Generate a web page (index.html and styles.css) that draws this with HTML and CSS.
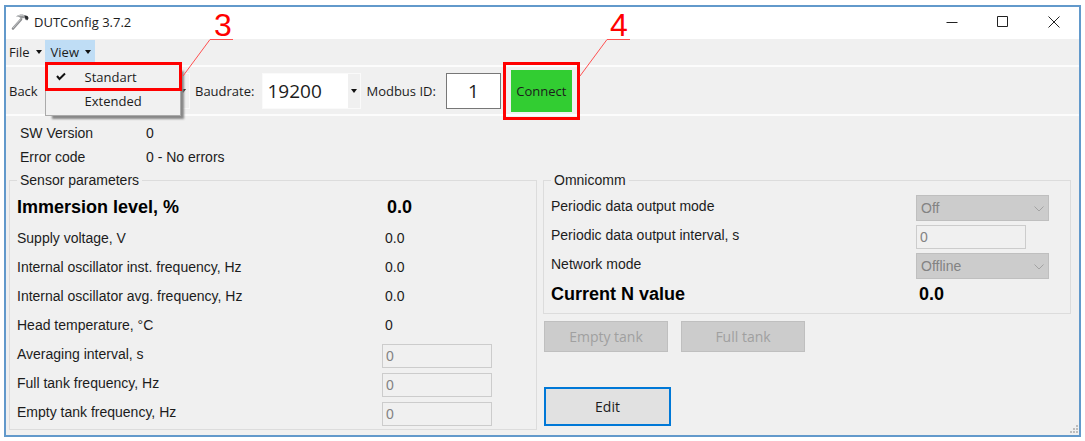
FILE: index.html
```html
<!DOCTYPE html>
<html lang="en">
<head>
<meta charset="utf-8">
<title>DUTConfig 3.7.2</title>
<link rel="stylesheet" href="styles.css">
</head>
<body>
<main class="window">
  <header class="titlebar">
    <svg class="app-icon" width="19" height="19" viewBox="0 0 19 19" aria-hidden="true">
      <path d="M2 15.500 10 6.500" stroke="#8d8f91" stroke-width="2.600" stroke-linecap="round"/>
      <path d="M2 15 9.500 6.500" stroke="#c3c5c7" stroke-width="1"/>
      <path d="M5 3.500C8 1.500 11 1 13 2l3 1 1.500 2-1 2.500-2-.5-1-2-3 .5-2.500-1.500z" fill="#97999b"/>
      <path d="M13.500 2.500 16.500 3l1 2-1 2-2-1z" fill="#292b2e"/>
      <path d="M6 3.500c3-1.500 5-1.500 7-.5" fill="none" stroke="#c9cbcd"/>
    </svg>
    <h1 class="title">DUTConfig 3.7.2</h1>
    <div class="caption-buttons">
      <button type="button" class="caption" aria-label="Minimize"><svg width="12" height="12" viewBox="0 0 12 12"><path d="M.5 6.500h11"/></svg></button>
      <button type="button" class="caption" aria-label="Maximize"><svg width="12" height="12" viewBox="0 0 12 12"><path d="M.5.5h10v10H.5z"/></svg></button>
      <button type="button" class="caption" aria-label="Close"><svg width="12" height="12" viewBox="0 0 12 12"><path d="M.5.5l11 11M11.500.5l-11 11"/></svg></button>
    </div>
  </header>

  <nav class="menubar">
    <button type="button" class="menu-button">File<span class="arrow"></span></button>
    <div class="menu-anchor">
      <button type="button" class="menu-button open" aria-haspopup="true" aria-expanded="true">View<span class="arrow"></span></button>
      <div class="menu" role="menu">
        <button type="button" class="menu-item" role="menuitemradio" aria-checked="true">
          <svg class="check" width="10" height="9" viewBox="0 0 10 9" aria-hidden="true"><path d="M1 4l2.500 3L9 1.500"/></svg>Standart
        </button>
        <button type="button" class="menu-item" role="menuitemradio" aria-checked="false">Extended</button>
        <span class="mark mark-menu"></span>
        <svg class="callout callout-menu" width="56" height="66" viewBox="0 0 56 66">
          <path d="M1 65 28 28.500h23"/>
          <text x="32" y="25">3</text>
        </svg>
      </div>
    </div>
  </nav>

  <div class="toolbar">
    <button type="button" class="back">Back</button>
    <span class="combo combo-port">
      <select aria-label="Port"><option></option></select><span class="combo-drop"><span class="arrow"></span></span>
    </span>
    <label class="tool-label" for="baud">Baudrate:</label>
    <span class="combo combo-baud">
      <select id="baud"><option>19200</option></select><span class="combo-drop"><span class="arrow"></span></span>
    </span>
    <label class="tool-label" for="modbus">Modbus ID:</label>
    <input class="modbus" id="modbus" type="text" value="1">
    <span class="connect-wrap">
      <button type="button" class="connect">Connect</button>
      <span class="mark mark-connect"></span>
      <svg class="callout callout-connect" width="56" height="66" viewBox="0 0 56 66">
        <path d="M1 65 28 28.500h23"/>
        <text x="31" y="25">4</text>
      </svg>
    </span>
  </div>

  <div class="content">
    <dl class="info">
      <dt>SW Version</dt><dd>0</dd>
      <dt>Error code</dt><dd>0 - No errors</dd>
    </dl>
    <div class="panels">
      <fieldset class="group sensor">
        <legend>Sensor parameters</legend>
        <div class="row lead"><span>Immersion level, %</span><output>0.0</output></div>
        <div class="row"><span>Supply voltage, V</span><output>0.0</output></div>
        <div class="row"><span>Internal oscillator inst. frequency, Hz</span><output>0.0</output></div>
        <div class="row"><span>Internal oscillator avg. frequency, Hz</span><output>0.0</output></div>
        <div class="row"><span>Head temperature, °C</span><output>0</output></div>
        <div class="row"><label for="avg">Averaging interval, s</label><input class="field" id="avg" type="text" value="0" disabled></div>
        <div class="row"><label for="full">Full tank frequency, Hz</label><input class="field" id="full" type="text" value="0" disabled></div>
        <div class="row"><label for="empty">Empty tank frequency, Hz</label><input class="field" id="empty" type="text" value="0" disabled></div>
      </fieldset>

      <div class="side">
        <fieldset class="group omnicomm">
          <legend>Omnicomm</legend>
          <div class="row"><label for="mode">Periodic data output mode</label>
            <span class="picker"><select id="mode" disabled><option>Off</option></select><svg class="chevron" width="10" height="6" viewBox="0 0 10 6" aria-hidden="true"><path d="M.5.5 5 5 9.500.5"/></svg></span></div>
          <div class="row"><label for="interval">Periodic data output interval, s</label><input class="field" id="interval" type="text" value="0" disabled></div>
          <div class="row"><label for="network">Network mode</label>
            <span class="picker"><select id="network" disabled><option>Offline</option></select><svg class="chevron" width="10" height="6" viewBox="0 0 10 6" aria-hidden="true"><path d="M.5.5 5 5 9.500.5"/></svg></span></div>
          <div class="row lead"><span>Current N value</span><output>0.0</output></div>
        </fieldset>
        <div class="actions">
          <button type="button" class="action" disabled>Empty tank</button>
          <button type="button" class="action" disabled>Full tank</button>
        </div>
        <button type="button" class="edit">Edit</button>
      </div>
    </div>
    <svg class="grip" width="10" height="10" viewBox="0 0 10 10" aria-hidden="true"><path d="M7 0h2v2H7zM7 3h2v2H7zM4 3h2v2H4zM7 6h2v2H7zM4 6h2v2H4zM1 6h2v2H1z"/></svg>
  </div>
</main>
</body>
</html>
```
FILE: styles.css
```css
* { box-sizing: border-box; }

body {
  margin: 0;
  padding: 5px 4px 4px;
  background: #fff;
  color: #1c1c1c;
  font: 14px/16px "Liberation Sans", Arial, sans-serif;
}

button, input, select { font: inherit; color: inherit; border-radius: 0; }
button { border: 0; padding: 0; background: none; }
select { appearance: none; opacity: 1; }

.window {
  border: 2px solid #6299cb;
  background: #f0f0f0;
}

.titlebar {
  display: flex;
  align-items: center;
  height: 32px;
  padding: 0 0 2px 5px;
  background: #fff;
}
.app-icon { fill: none; }
.title {
  margin: 0 0 0 4px;
  font: 13px/18px "Open Sans", "Noto Sans", sans-serif;
}
.caption-buttons { display: flex; margin-left: auto; }
.caption {
  display: grid;
  place-items: center;
  width: 51px;
  height: 30px;
}
.caption svg { fill: none; stroke: #222; }

.menubar, .toolbar {
  display: flex;
  font-family: "Open Sans", "Noto Sans", sans-serif;
  font-size: 13px;
}
.menubar {
  height: 28px;
  padding-top: 1px;
  border-bottom: 2px solid #fcfcfc;
}
.menu-button {
  display: flex;
  align-items: center;
  gap: 6px;
  height: 24px;
  padding: 0 3px;
}
.menu-button.open { padding: 0 4px 0 6px; background: #bfddf5; }
.arrow {
  border: 3px solid transparent;
  border-top: 4px solid #111;
  border-bottom: 0;
}
.menu-anchor { position: relative; }
.menu {
  position: absolute;
  z-index: 2;
  top: 24px;
  left: 0;
  width: 136px;
  padding: 0 0 2px;
  border: 1px solid #aaa;
  background: #f1f1f1;
  box-shadow: 5px 5px 2px -2px #888;
}
.menu-item {
  display: block;
  position: relative;
  width: 100%;
  height: 24px;
  padding-left: 39px;
  text-align: left;
}
.check {
  position: absolute;
  top: 7px;
  left: 10px;
  fill: none;
  stroke: #111;
  stroke-width: 2;
}

.mark { position: absolute; border: 3px solid #f00; pointer-events: none; }
.mark-menu { inset: -3px -2px 24px -1px; }
.mark-connect { inset: -8px; }
.callout { position: absolute; overflow: visible; fill: none; stroke: #ff5050; }
.callout text { fill: #f00; stroke: none; font: 32px "Liberation Sans", Arial, sans-serif; }
.callout-menu { top: -54px; left: 136px; }
.callout-connect { top: -59px; left: 68px; }

.toolbar {
  align-items: center;
  height: 49px;
  padding-left: 3px;
  border-bottom: 2px solid #fcfcfc;
}
.back { width: 36px; text-align: left; }
.combo {
  display: flex;
  height: 36px;
  border: 1px solid #fafafa;
}
.combo select {
  flex: 1;
  min-width: 0;
  border: 0;
  padding: 0 4px;
  background: #fff;
  font-size: 19px;
}
.combo-drop { display: grid; place-items: center; width: 12px; }
.combo-port { width: 145px; }
.combo-baud { width: 99px; }
.tool-label { margin: 0 8px 0 5px; }
.modbus {
  width: 55px;
  height: 36px;
  margin-left: 2px;
  border: 1px solid #777;
  background: #fff;
  text-align: center;
  font-size: 19px;
}
.connect-wrap { position: relative; margin-left: 10px; }
.connect {
  display: block;
  width: 61px;
  height: 42px;
  background: #32cd32;
}

.content { position: relative; padding: 5px 8px 5px 3px; }
.info {
  display: grid;
  grid-template-columns: 126px 1fr;
  margin: 0;
  padding: 0 0 3px 11px;
  line-height: 24px;
}
.info dd { margin: 0; }
.panels {
  display: grid;
  grid-template-columns: 1fr 1fr;
  gap: 6px;
}
.group {
  min-width: 0;
  margin: 0;
  padding: 3px 0 3px 7px;
  border: 1px solid #dcdcdc;
}
.group legend { padding: 0 3px; }
.row {
  display: grid;
  grid-template-columns: 1fr 110px;
  grid-template-rows: 100%;
  align-items: center;
  height: 29px;
}
.row output { padding-left: 3px; }
.row.lead { height: 32px; font-size: 18px; font-weight: bold; color: #000; }
.sensor { padding-right: 44px; }
.sensor .lead output { padding-left: 5px; }
.omnicomm { padding-right: 21px; }
.omnicomm .row { grid-template-columns: 1fr 133px; }

.field {
  width: 110px;
  height: 24px;
  margin-top: 4px;
  padding: 0 3px;
  border: 1px solid #ccc;
  background: #f0f0f0;
  color: #838383;
}
.picker { position: relative; margin-top: 4px; }
.picker select {
  display: block;
  width: 100%;
  height: 26px;
  padding: 0 4px;
  border: 1px solid #bfbfbf;
  background: #ccc;
  color: #838383;
}
.chevron {
  position: absolute;
  top: 11px;
  right: 5px;
  fill: none;
  stroke: #a3a3a3;
}

.side { display: flex; flex-direction: column; align-items: flex-start; padding-bottom: 4px; }
.side .group { width: 100%; }
.actions { display: flex; gap: 13px; padding: 7px 1px 0; }
.action, .edit { font-family: "Open Sans", "Noto Sans", sans-serif; }
.action {
  width: 124px;
  height: 31px;
  border: 1px solid #bfbfbf;
  background: #ccc;
  color: #a0a0a0;
}
.edit {
  width: 127px;
  height: 39px;
  margin: auto 0 0 1px;
  border: 2px solid #0078d7;
  background: #e1e1e1;
}
.grip { position: absolute; right: 0; bottom: 0; fill: #bdbdbd; }
```
